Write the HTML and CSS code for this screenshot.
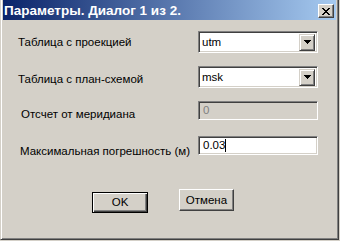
FILE: index.html
```html
<!DOCTYPE html>
<html>
<head>
<meta charset="utf-8">
<link rel="stylesheet" href="styles.css">
</head>
<body>
<div class="window">
  <div class="titlebar">
    <span class="title">Параметры. Диалог 1 из 2.</span>
    <span class="close">
      <svg width="8" height="7" viewBox="0 0 8 7" shape-rendering="crispEdges"><path d="M0 0h2v1H0zM6 0h2v1H6zM1 1h2v1H1zM5 1h2v1H5zM2 2h4v1H2zM3 3h2v1H3zM2 4h4v1H2zM1 5h2v1H1zM5 5h2v1H5zM0 6h2v1H0zM6 6h2v1H6z" fill="#000"/></svg>
    </span>
  </div>
  <div class="content">
    <div class="form">
      <div class="lbl l1">Таблица с проекцией</div>
      <div class="combo"><span class="val">utm</span><span class="drop"><svg width="7" height="4" viewBox="0 0 7 4" shape-rendering="crispEdges"><path d="M0 0h7v1H0zM1 1h5v1H1zM2 2h3v1H2zM3 3h1v1H3z" fill="#000"/></svg></span></div>
      <div class="lbl l2">Таблица с план-схемой</div>
      <div class="combo"><span class="val">msk</span><span class="drop"><svg width="7" height="4" viewBox="0 0 7 4" shape-rendering="crispEdges"><path d="M0 0h7v1H0zM1 1h5v1H1zM2 2h3v1H2zM3 3h1v1H3z" fill="#000"/></svg></span></div>
      <div class="lbl l3">Отсчет от меридиана</div>
      <div class="edit disabled"><span class="val">0</span></div>
      <div class="lbl l4">Максимальная погрешность (м)</div>
      <div class="edit"><span class="val">0.03</span><span class="caret"></span></div>
    </div>
    <div class="buttons">
      <div class="btn default"><span>OK</span></div>
      <div class="btn cancel"><span>Отмена</span></div>
    </div>
  </div>
</div>
</body>
</html>
```

FILE: styles.css
```css
html, body {
  margin: 0;
  padding: 0;
}
body {
  width: 340px;
  height: 241px;
  overflow: hidden;
  background: #d4d0c8;
  font-family: "Liberation Sans", Arial, sans-serif;
  font-size: 11.5px;
  color: #000;
}
.window {
  box-sizing: border-box;
  width: 339px;
  height: 240px;
  border-left: 1px solid #d4d0c8;
  border-right: 1px solid #404040;
  border-bottom: 1px solid #404040;
  box-shadow: inset 1px 0 #fff, inset -1px -1px #808080;
  padding: 0 2px 2px 2px;
  display: flex;
  flex-direction: column;
  background: #d4d0c8;
}
.titlebar {
  height: 20px;
  display: flex;
  align-items: flex-start;
  justify-content: space-between;
  background: linear-gradient(to right, #0a246a, #a6caf0);
  padding: 0 2px 0 1px;
  flex-shrink: 0;
}
.title {
  color: #fff;
  font-weight: bold;
  font-size: 13.5px;
  line-height: 15px;
  padding-top: 3px;
  white-space: nowrap;
}
.close {
  margin-top: 4px;
  box-sizing: border-box;
  width: 16px;
  height: 14px;
  background: #d4d0c8;
  border: 1px solid;
  border-color: #fff #404040 #404040 #fff;
  box-shadow: inset -1px -1px #808080;
  display: flex;
  align-items: center;
  justify-content: center;
  padding-right: 1px;
}
.close svg { display: block; }
.content {
  padding-top: 11px;
  display: flex;
  flex-direction: column;
}
.form {
  display: grid;
  grid-template-columns: 195px 120px;
  grid-auto-rows: 35px;
  align-items: start;
}
.lbl {
  line-height: 13px;
  white-space: nowrap;
}
.l1 { padding-left: 15px; margin-top: 5px; }
.l2 { padding-left: 15px; margin-top: 7px; }
.l3 { padding-left: 18px; margin-top: 7px; }
.l4 { padding-left: 17px; margin-top: 9px; }
.combo, .edit {
  box-sizing: border-box;
  border: 1px solid;
  border-color: #808080 #fff #fff #808080;
  box-shadow: inset 1px 1px #404040, inset -1px -1px #d4d0c8;
  background: #fff;
  display: flex;
  align-items: center;
  padding: 2px;
}
.combo { height: 22px; }
.edit { height: 19px; }
.val {
  flex: 1;
  padding-left: 1px;
  line-height: 13px;
}
.edit .val { flex: 0 0 auto; padding-left: 2px; }
.disabled { background: #d4d0c8; }
.disabled .val { color: #808080; }
.caret {
  width: 1px;
  height: 13px;
  background: #000;
}
.drop {
  box-sizing: border-box;
  width: 16px;
  height: 17px;
  background: #d4d0c8;
  border: 1px solid;
  border-color: #d4d0c8 #404040 #404040 #d4d0c8;
  box-shadow: inset 1px 1px #fff, inset -1px -1px #808080;
  display: flex;
  align-items: center;
  justify-content: center;
}
.drop svg { display: block; }
.buttons {
  margin-top: 18px;
  padding-left: 89px;
  display: flex;
  align-items: flex-start;
  gap: 31px;
}
.btn {
  box-sizing: border-box;
  height: 21px;
  background: #d4d0c8;
  border: 1px solid;
  border-color: #fff #404040 #404040 #fff;
  box-shadow: inset -1px -1px #808080;
  display: flex;
  align-items: center;
  justify-content: center;
  line-height: 13px;
}
.default {
  width: 56px;
  margin-top: 3px;
  border-color: #000;
  box-shadow: inset 1px 1px #fff, inset -1px -1px #404040, inset -2px -2px #808080;
}
.cancel {
  width: 55px;
  height: 22px;
}
```
